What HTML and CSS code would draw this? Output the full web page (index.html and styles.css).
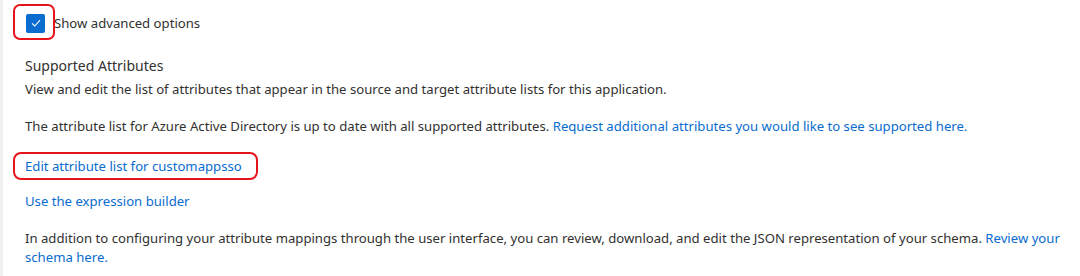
FILE: index.html
```html
<!DOCTYPE html>
<html>
<head>
    <meta charset="utf-8">
    <title>Attribute mapping</title>
    <link rel="stylesheet" href="styles.css">
</head>
<body>
    <div class="panel">
        <div class="check-row">
            <span class="check-wrap">
                <span class="checkbox">
                    <svg width="12" height="12" viewBox="0 0 12 12"><path d="M2 6.3 L4.8 9 L10 3.2" fill="none" stroke="#fff" stroke-width="1.1"/></svg>
                </span>
            </span>
            <span class="check-label">Show advanced options</span>
        </div>

        <h3 class="section-title">Supported Attributes</h3>
        <p class="desc">View and edit the list of attributes that appear in the source and target attribute lists for this application.</p>

        <p class="para">The attribute list for Azure Active Directory is up to date with all supported attributes. <a href="#">Request additional attributes you would like to see supported here.</a></p>

        <p class="para para-edit"><a href="#" class="marked">Edit attribute list for customappsso</a></p>

        <p class="para para-builder"><a href="#">Use the expression builder</a></p>

        <p class="para">In addition to configuring your attribute mappings through the user interface, you can review, download, and edit the JSON representation of your schema. <a href="#">Review your schema here.</a></p>
    </div>
</body>
</html>
```

FILE: styles.css
```css
body {
    margin: 0;
    background: #ffffff;
    font-family: "Noto Sans", "Open Sans", Arial, sans-serif;
    font-size: 13.15px;
    color: #323130;
}
.panel {
    border-left: 3px solid #f0f0f0;
    padding: 13px 10px 0 22px;
    min-height: 276px;
    box-sizing: border-box;
}
a {
    color: #0a6ccf;
    text-decoration: none;
}
.check-row {
    display: flex;
    align-items: center;
    height: 20px;
}
.check-wrap {
    position: relative;
    display: inline-flex;
    margin-left: 1px;
    margin-right: 9px;
}
.check-wrap::after {
    content: "";
    position: absolute;
    left: -13px;
    top: -10px;
    width: 38px;
    height: 32px;
    border: 2px solid #e8141c;
    border-radius: 7px;
}
.checkbox {
    width: 19px;
    height: 19px;
    background: #0a6ccf;
    border-radius: 2px;
    display: flex;
    align-items: center;
    justify-content: center;
}
.section-title {
    margin: 23px 0 0;
    font-size: 14px;
    font-weight: 400;
    line-height: 20px;
}
.desc {
    margin: 3px 0 0;
    line-height: 20px;
}
.para {
    margin: 18px 0 0;
    line-height: 19px;
}
.para-edit {
    margin-top: 21px;
}
.para-builder {
    margin-top: 16px;
}
.marked {
    position: relative;
    display: inline-block;
}
.marked::after {
    content: "";
    position: absolute;
    left: -12px;
    top: -5px;
    right: -16px;
    bottom: -4px;
    border: 2px solid #e8141c;
    border-radius: 8px;
}
```
